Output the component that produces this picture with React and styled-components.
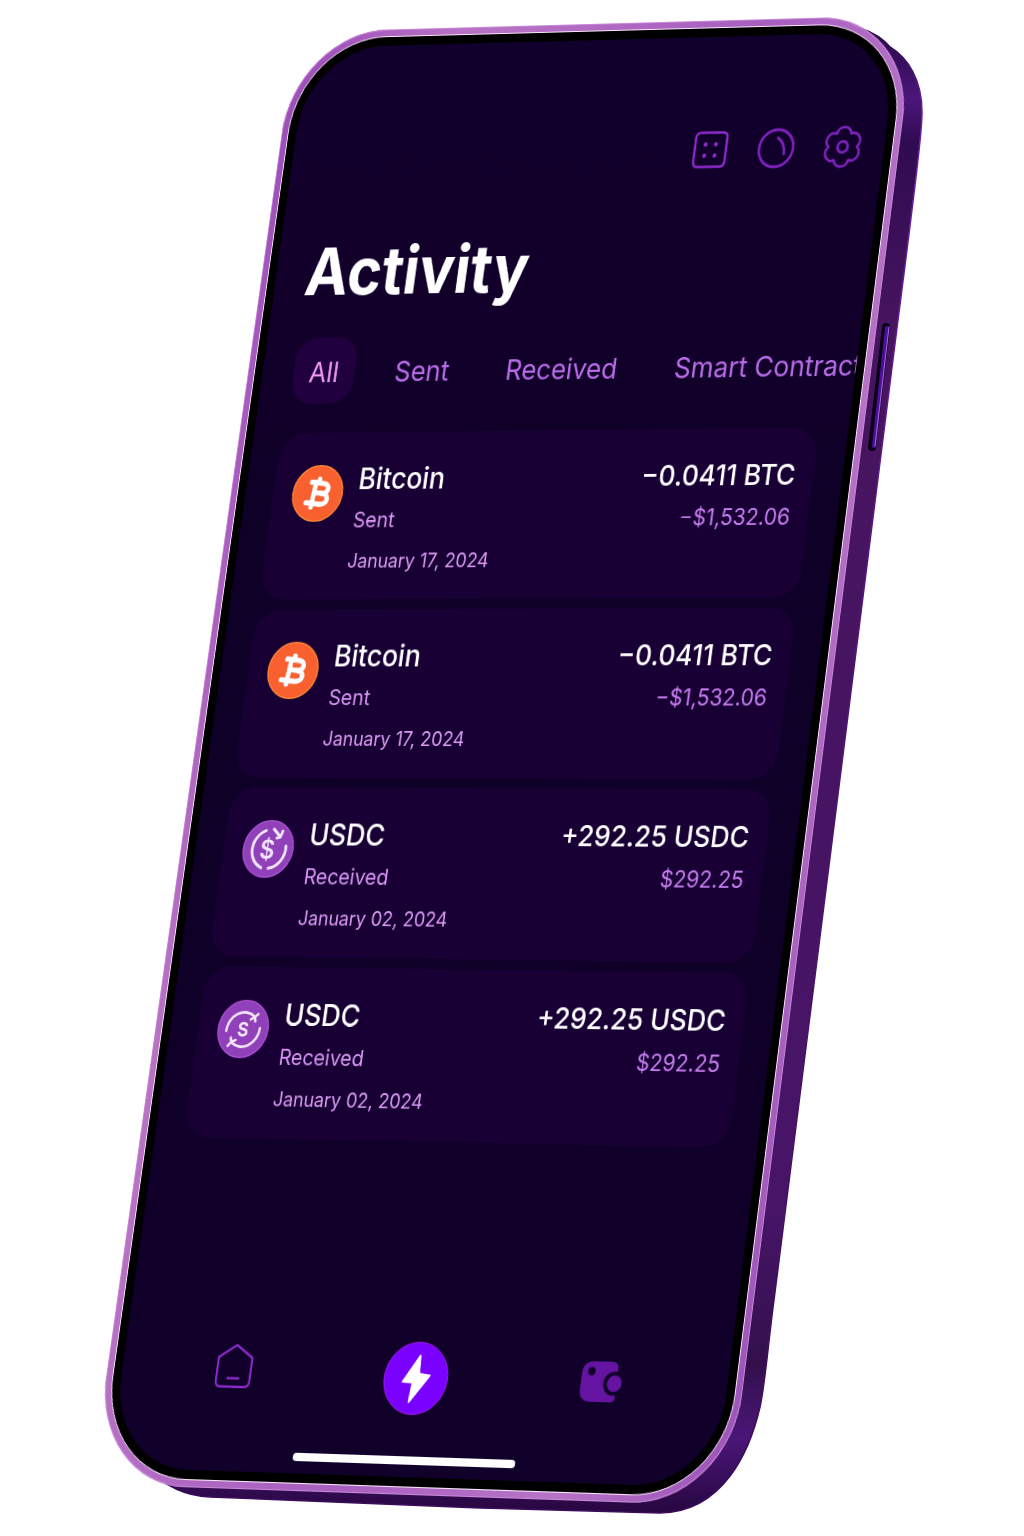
import React from "react";
import styled, { createGlobalStyle } from "styled-components";

/* ---------- device geometry ---------- */

const FACE = { width: 704, height: 1470 };

// Corners of the tilted face, relative to the upright one:
// top left, top right, bottom right, bottom left.
const TILT = [
  [136, -1],
  [756, -18],
  [568, 1473],
  [-69, 1451],
];

function perspectiveMatrix({ width, height }, [[x0, y0], [x1, y1], [x2, y2], [x3, y3]]) {
  const ax = x1 - x2;
  const ay = y1 - y2;
  const bx = x3 - x2;
  const by = y3 - y2;
  const sx = x0 - x1 + x2 - x3;
  const sy = y0 - y1 + y2 - y3;
  const det = ax * by - bx * ay;
  const g = (sx * by - bx * sy) / det;
  const h = (ax * sy - sx * ay) / det;
  const m = [
    (x1 - x0 + g * x1) / width, (y1 - y0 + g * y1) / width, 0, g / width,
    (x3 - x0 + h * x3) / height, (y3 - y0 + h * y3) / height, 0, h / height,
    0, 0, 1, 0,
    x0, y0, 0, 1,
  ];
  return `matrix3d(${m.map((n) => n.toFixed(8)).join(", ")})`;
}

/* ---------- styles ---------- */

const GlobalStyle = createGlobalStyle`
  *, *::before, *::after { box-sizing: border-box; }
  body {
    margin: 0;
    background: #fff;
    font-family: Inter, "Liberation Sans", sans-serif;
  }
  button { font: inherit; color: inherit; background: none; border: 0; padding: 0; cursor: pointer; }
  h1, h2, p, ul { margin: 0; padding: 0; }
  ul { list-style: none; }
`;

const Stage = styled.main`
  min-height: 100vh;
  display: flex;
  justify-content: center;
  align-items: center;
  padding: 33px 0;
  overflow: hidden;
`;

const Device = styled.div`
  position: relative;
  flex: none;
  width: ${FACE.width}px;
`;

const Chassis = styled.svg`
  position: absolute;
  left: -160px;
  top: -33px;
  width: 1024px;
  height: 1536px;
`;

const Frame = styled.div`
  position: relative;
  padding: 7px;
  border-radius: 106px;
  background: linear-gradient(100deg, #9a4bb8 0%, #b873c4 20%, #a85fc0 55%, #b673c6 80%, #9c52b8 100%);
  box-shadow: inset 0 0 0 1px #c98ad8;
  outline: 2px solid transparent;
  transform-origin: 0 0;
  transform: ${perspectiveMatrix(FACE, TILT)};
`;

const Bezel = styled.div`
  padding: 9px;
  border: 1px solid #fbeafd;
  border-radius: 99px;
  background: #000;
`;

const Screen = styled.div`
  display: flex;
  flex-direction: column;
  min-height: ${FACE.height - 34}px;
  border-radius: 89px;
  overflow: hidden;
  background: linear-gradient(180deg, #11002b 0%, #12002b 20%, #0e0026 34%, #100029 75%, #11002a 100%);
`;

const Toolbar = styled.header`
  display: flex;
  justify-content: flex-end;
  gap: 32px;
  padding: 95px 25px 0;
`;

const IconButton = styled.button`
  display: grid;
  place-items: center;
  width: ${(p) => p.$width || 42}px;
  height: ${(p) => p.$height || 42}px;
  color: ${(p) => p.$tone || "#8f2bd0"};
`;

const Title = styled.h1`
  padding: 55px 34px 0;
  font-size: 67px;
  line-height: 84px;
  font-weight: 700;
  color: #fff;
`;

const Tabs = styled.nav`
  display: flex;
  gap: 28px;
  padding: 26px 0 0 36px;
`;

const Tab = styled.button`
  flex: none;
  height: 68px;
  padding: 2px 18px 0;
  border-radius: 24px;
  font-size: 29px;
  white-space: nowrap;
  color: ${(p) => (p.$active ? "#f29af8" : "#b96ce8")};
  background: ${(p) => (p.$active ? "#20003e" : "none")};
`;

const List = styled.ul`
  display: flex;
  flex-direction: column;
  gap: 10px;
  padding: 30px 32px 0;
`;

const Card = styled.li`
  display: flex;
  align-items: flex-start;
  gap: 16px;
  padding: 26px 20px 18px 22px;
  border-radius: 28px;
  background: #180035;
`;

const Coin = styled.svg`
  flex: none;
  width: 58px;
  height: 58px;
  margin-top: 7px;
`;

const Details = styled.div`
  flex: 1;
  line-height: 42px;
`;

const Asset = styled.h2`
  font-size: 30px;
  font-weight: 500;
  line-height: 42px;
  color: #fff;
`;

const Status = styled.p`
  font-size: 22px;
  color: #d795f2;
`;

const When = styled.p`
  font-size: 20px;
  color: #dc9cf4;
`;

const Value = styled.div`
  text-align: right;
  line-height: 42px;
`;

const Amount = styled.p`
  font-size: 29px;
  font-weight: 500;
  color: #fff;
`;

const Fiat = styled.p`
  font-size: 23px;
  color: #c77df0;
`;

const BottomNav = styled.nav`
  display: flex;
  justify-content: space-between;
  align-items: flex-start;
  margin-top: auto;
  padding: 0 112px 40px 101px;
`;

const ActionButton = styled.button`
  display: grid;
  place-items: center;
  width: 71px;
  height: 71px;
  border: 1px solid #a31cf0;
  border-radius: 50%;
  background: #7a00ff;
  color: #fff;
`;

const HomeIndicator = styled.div`
  align-self: center;
  width: 246px;
  height: 8px;
  margin: 0 14px 12px 0;
  border-radius: 4px;
  background: #fff;
`;

/* ---------- icons ---------- */

const KeypadIcon = () => (
  <svg width="42" height="42" viewBox="0 0 42 42" fill="none" stroke="currentColor" strokeWidth="2.6">
    <rect x="4" y="3.5" width="35" height="35" rx="5" />
    <g strokeWidth="1.6" fill="currentColor">
      <circle cx="15.5" cy="15.5" r="1.4" />
      <circle cx="27" cy="15.5" r="1.4" />
      <circle cx="15.5" cy="27" r="1.4" />
      <circle cx="27" cy="27" r="1.4" />
    </g>
  </svg>
);

const OrbIcon = () => (
  <svg width="42" height="42" viewBox="0 0 42 42" fill="none" stroke="currentColor" strokeWidth="2.8" strokeLinecap="round">
    <circle cx="21" cy="21" r="19" />
    <path d="M22 10.5C27 13.5 30.5 19 30.5 27" />
  </svg>
);

const flower = Array.from({ length: 7 }, (_, k) => {
  const a = (k * Math.PI) / 3;
  const x = (21 + 15.8 * Math.cos(a)).toFixed(2);
  const y = (21 + 15.8 * Math.sin(a)).toFixed(2);
  return k === 0 ? `M${x} ${y}` : `A8.05 8.05 0 0 1 ${x} ${y}`;
}).join("");

const SettingsIcon = () => (
  <svg width="42" height="42" viewBox="0 0 42 42" fill="none" stroke="currentColor" strokeWidth="2.8" strokeLinejoin="round" overflow="visible">
    <path d={`${flower}Z`} />
    <circle cx="21" cy="21" r="5.6" />
  </svg>
);

const HomeIcon = () => (
  <svg width="44" height="46" viewBox="0 0 42 44" fill="none" stroke="currentColor" strokeWidth="2.2" strokeLinejoin="round">
    <path d="M21 3L39 14.500V37A5 5 0 0 1 34 42H8A5 5 0 0 1 3 37V14.500Z" />
    <path d="M14 34H28" />
  </svg>
);

const BoltIcon = () => (
  <svg width="40" height="52" viewBox="0 0 40 52" fill="currentColor" stroke="currentColor" strokeWidth="2" strokeLinejoin="round">
    <path d="M21.5 3.5L5.5 29L16.5 29.5L15 48.5L34.5 22.5L22.5 21Z" />
  </svg>
);

const WalletIcon = () => (
  <svg width="48" height="42" viewBox="0 0 48 42" fill="currentColor">
    <path
      fillRule="evenodd"
      d="M14 1H34Q41 1 41 8V10.500H38A11.500 11.500 0 0 0 38 33.500H41V35Q41 40 36 40H14Q2 40 2 28V13Q2 1 14 1ZM12.500 6.500A4 4 0 1 0 12.500 14.500A4 4 0 1 0 12.500 6.500Z"
    />
    <circle cx="38.500" cy="22" r="8" />
  </svg>
);

const BitcoinCoin = () => (
  <Coin viewBox="0 0 60 60" aria-hidden="true">
    <circle cx="30" cy="30" r="29.300" fill="#f8602f" stroke="#ff8a35" strokeWidth="1.400" />
    <g transform="rotate(6 30 30)" fill="none" stroke="#fff" strokeWidth="5.400" strokeLinecap="round" strokeLinejoin="round">
      <path d="M20.500 19H34.500C43.500 19 43.500 29.500 34.500 29.500H26" />
      <path d="M34.500 29.500C45 29.500 45 41 34.500 41H18.500" />
      <path d="M25.500 19V41" />
      <path d="M29 15V19M25.500 41V45" />
    </g>
  </Coin>
);

const DollarCoin = () => (
  <Coin viewBox="0 0 60 60" aria-hidden="true">
    <circle cx="30" cy="30" r="29.300" fill="#9040b8" stroke="#b052d8" strokeWidth="1.400" />
    <g fill="none" stroke="#f2e4fb" strokeWidth="3.200" strokeLinecap="round" strokeLinejoin="round">
      <path d="M25 11A20.500 20.500 0 0 0 24.500 49.500" />
      <path d="M50.500 27A20.500 20.500 0 0 1 33 50" />
      <path d="M34 9.500L42.500 17.500M44.500 11.500L42.500 17.500L38.500 18.500" />
    </g>
    <text x="29" y="40" fill="#f2e4fb" fontFamily="Inter, sans-serif" fontSize="27" fontWeight="600" textAnchor="middle">$</text>
  </Coin>
);

const SwapCoin = () => (
  <Coin viewBox="0 0 60 60" aria-hidden="true">
    <circle cx="30" cy="30" r="29.300" fill="#9040b8" stroke="#b052d8" strokeWidth="1.400" />
    <g fill="none" stroke="#f2e4fb" strokeWidth="2.800" strokeLinecap="round" strokeLinejoin="round">
      <path d="M10.500 32A19 19 0 0 1 42 17.500M45.500 14.500L42 17.500L43 22M37.500 20L42 17.500" />
      <path d="M49.500 29A19 19 0 0 1 18 43.500M14.500 47.500L18 43.500L17 39M23 41.500L18 43.500" />
    </g>
    <text x="30" y="37.500" fill="#f2e4fb" fontFamily="Inter, sans-serif" fontSize="20" fontWeight="700" textAnchor="middle">S</text>
  </Coin>
);

const Body = () => (
  <Chassis viewBox="0 0 1024 1536" aria-hidden="true">
    <defs>
      <linearGradient id="side" x1="0" y1="0" x2="0" y2="1">
        <stop offset="0" stopColor="#240645" />
        <stop offset="0.05" stopColor="#4b1679" />
        <stop offset="0.08" stopColor="#2f0b52" />
        <stop offset="0.2" stopColor="#47145f" />
        <stop offset="0.8" stopColor="#471468" />
        <stop offset="0.9" stopColor="#33104c" />
        <stop offset="0.95" stopColor="#4a1678" />
        <stop offset="1" stopColor="#27063f" />
      </linearGradient>
      <linearGradient id="rim" x1="0" y1="0" x2="0" y2="1">
        <stop offset="0" stopColor="#1c0833" />
        <stop offset="0.06" stopColor="#6a1fa0" />
        <stop offset="0.5" stopColor="#4d1470" />
        <stop offset="1" stopColor="#3a0c5c" />
      </linearGradient>
    </defs>
    <path
      d="M820 24C850 22 876 30 890 47C908 58 922 80 922 112C922 126 920 150 898 320L774 1300C768 1345 765 1385 760 1407C750 1450 724 1512 660 1513L480 1508L210 1497C185 1496 165 1486 150 1470L400 900Z"
      fill="url(#side)"
      stroke="url(#rim)"
      strokeWidth="1.500"
    />
    <path d="M886 327L872 447" stroke="#0b0016" strokeWidth="8" strokeLinecap="round" />
    <path d="M887 328L874 446" stroke="#4a109a" strokeWidth="4" strokeLinecap="round" />
    <path d="M889 327L875 446" stroke="#a56be0" strokeWidth="1" strokeLinecap="round" />
  </Chassis>
);

/* ---------- content ---------- */

const tabs = ["All", "Sent", "Received", "Smart Contracts"];

const transactions = [
  { id: 1, coin: BitcoinCoin, asset: "Bitcoin", status: "Sent", date: "January 17, 2024", amount: "−0.0411 BTC", fiat: "−$1,532.06" },
  { id: 2, coin: BitcoinCoin, asset: "Bitcoin", status: "Sent", date: "January 17, 2024", amount: "−0.0411 BTC", fiat: "−$1,532.06" },
  { id: 3, coin: DollarCoin, asset: "USDC", status: "Received", date: "January 02, 2024", amount: "+292.25 USDC", fiat: "$292.25" },
  { id: 4, coin: SwapCoin, asset: "USDC", status: "Received", date: "January 02, 2024", amount: "+292.25 USDC", fiat: "$292.25" },
];

function Transaction({ coin: CoinIcon, asset, status, date, amount, fiat }) {
  return (
    <Card>
      <CoinIcon />
      <Details>
        <Asset>{asset}</Asset>
        <Status>{status}</Status>
        <When>{date}</When>
      </Details>
      <Value>
        <Amount>{amount}</Amount>
        <Fiat>{fiat}</Fiat>
      </Value>
    </Card>
  );
}

export default function App() {
  const [active, setActive] = React.useState("All");
  return (
    <>
      <GlobalStyle />
      <Stage>
        <Device>
          <Body />
          <Frame>
            <Bezel>
              <Screen>
                <Toolbar>
                  <IconButton aria-label="Keypad"><KeypadIcon /></IconButton>
                  <IconButton aria-label="Theme" $tone="#7d22bd"><OrbIcon /></IconButton>
                  <IconButton aria-label="Settings" $tone="#7d22bd"><SettingsIcon /></IconButton>
                </Toolbar>
                <Title>Activity</Title>
                <Tabs aria-label="Activity filter">
                  {tabs.map((t) => (
                    <Tab key={t} $active={t === active} aria-pressed={t === active} onClick={() => setActive(t)}>
                      {t}
                    </Tab>
                  ))}
                </Tabs>
                <List>
                  {transactions.map((t) => (
                    <Transaction key={t.id} {...t} />
                  ))}
                </List>
                <BottomNav aria-label="Main">
                  <IconButton aria-label="Home" $width={50} $height={56}><HomeIcon /></IconButton>
                  <ActionButton aria-label="Activity"><BoltIcon /></ActionButton>
                  <IconButton aria-label="Wallet" $tone="#6414a0" $width={50} $height={68}><WalletIcon /></IconButton>
                </BottomNav>
                <HomeIndicator />
              </Screen>
            </Bezel>
          </Frame>
        </Device>
      </Stage>
    </>
  );
}
